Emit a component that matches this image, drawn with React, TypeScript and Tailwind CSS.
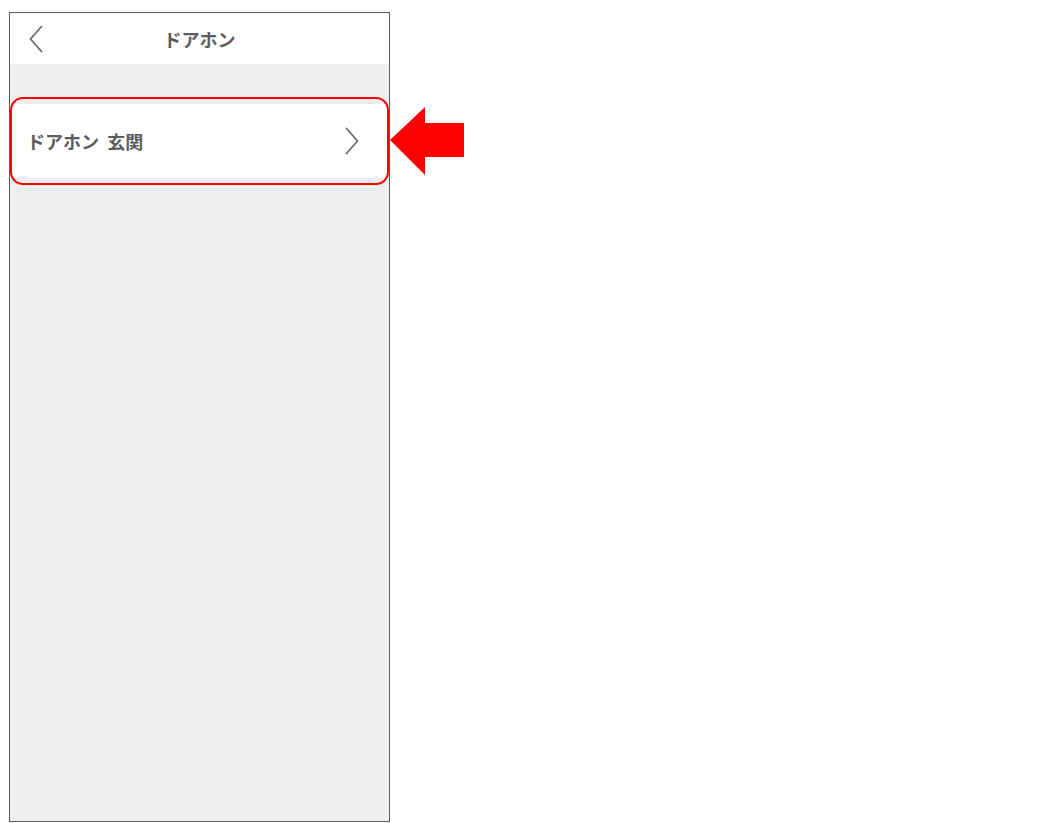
function Chevron({ dir, className }: { dir: "left" | "right"; className?: string }) {
  return (
    <svg className={className} width="14" height="28" viewBox="0 0 14 28" fill="none">
      <path
        d={dir === "left" ? "M12.5 1.5 L1.5 14 L12.5 26.5" : "M1.5 1.5 L12.5 14 L1.5 26.5"}
        stroke="#6a6a6a"
        strokeWidth="1.8"
        strokeLinecap="round"
        strokeLinejoin="round"
      />
    </svg>
  );
}

export default function App() {
  return (
    <div
      className="min-h-screen bg-white pl-[9px] pt-[12px]"
      style={{ fontFamily: '"Noto Sans CJK JP", "Noto Sans", sans-serif' }}
    >
      <div className="flex h-[810px] w-[381px] flex-col border border-[#5a5a5a]">
        <header className="relative flex h-[51px] shrink-0 items-center justify-center bg-white">
          <Chevron dir="left" className="absolute left-[19px] top-[12px]" />
          <span className="text-[18px] font-bold leading-none text-[#5c5c5c]">ドアホン</span>
        </header>

        <main className="flex-1 bg-[#efefef] pt-[40px]">
          <div className="relative">
            <button
              type="button"
              className="flex h-[74px] w-full items-center justify-between bg-white pl-[17px] pr-[30px]"
            >
              <span className="text-[18px] font-bold leading-none text-[#5c5c5c]">
                ドアホン&nbsp;&nbsp;玄関
              </span>
              <Chevron dir="right" />
            </button>

            {/* annotation */}
            <div className="pointer-events-none absolute -bottom-[7px] -top-[7px] left-0 right-0 rounded-[13px] border-2 border-[#ff0000]" />
            <svg
              className="absolute left-[calc(100%+1px)] top-[3px]"
              width="74"
              height="70"
              viewBox="0 0 74 70"
            >
              <polygon points="0,33 35,0 35,16 74,16 74,50 35,50 35,68" fill="#ff0000" />
            </svg>
          </div>
        </main>
      </div>
    </div>
  );
}
